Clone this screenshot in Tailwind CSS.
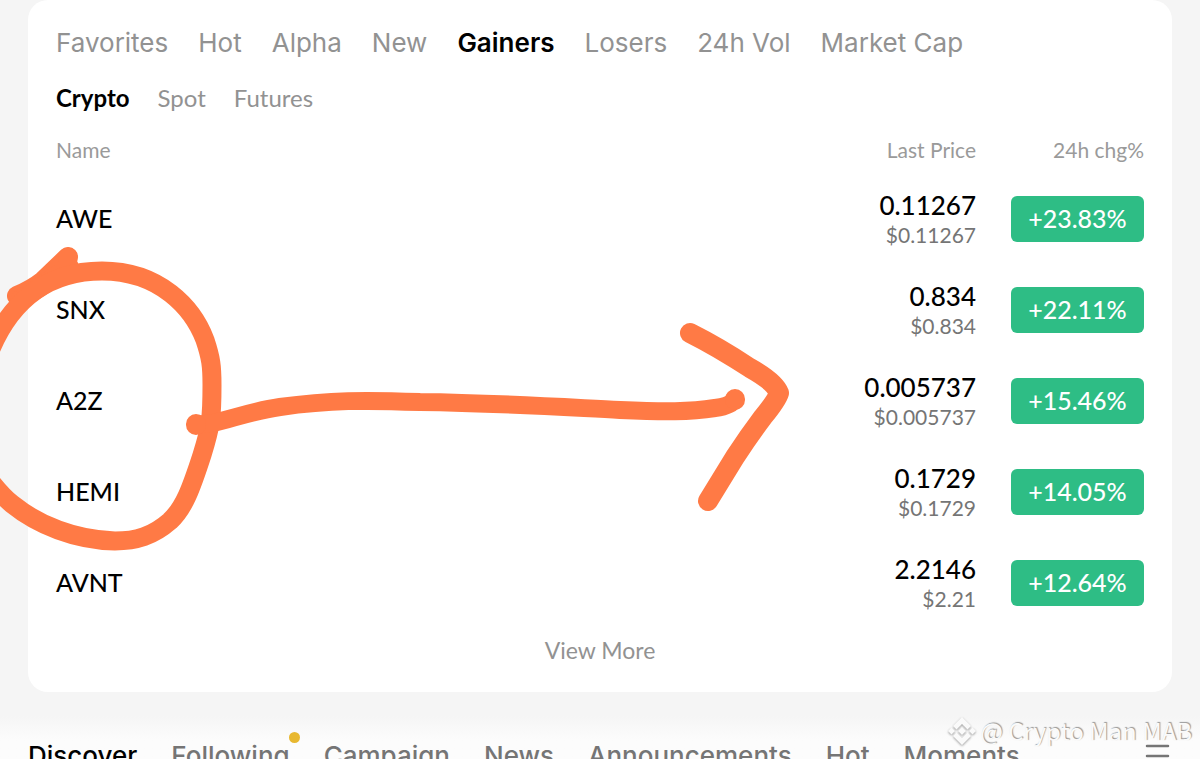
<!DOCTYPE html>
<html lang="en">
 <head>
  <meta charset="utf-8"/>
  <meta content="width=device-width, initial-scale=1.0" name="viewport"/>
  <title>Markets: Gainers</title>
  <script src="https://cdn.jsdelivr.net/npm/@tailwindcss/browser@4"></script>
 </head>
 <body class="relative h-screen overflow-hidden bg-[#f5f5f5] font-['Lato',sans-serif] text-black">
  <!-- Market list card -->
  <main class="mx-7 rounded-[20px] bg-white px-7 pt-6 pb-5">
   <nav class="flex gap-[30px] font-['Inter',sans-serif] text-[26px] leading-[38px] text-[#929292]" aria-label="Lists">
    <a href="#">Favorites</a>
    <a href="#">Hot</a>
    <a href="#">Alpha</a>
    <a href="#">New</a>
    <a href="#" class="font-semibold text-black">Gainers</a>
    <a href="#">Losers</a>
    <a href="#">24h Vol</a>
    <a href="#">Market Cap</a>
   </nav>
   <nav class="mt-4 flex gap-7 text-[24px] leading-10 text-[#929292]" aria-label="Market type">
    <a href="#" class="font-bold text-black">Crypto</a>
    <a href="#">Spot</a>
    <a href="#">Futures</a>
   </nav>
   <table class="mt-3 w-full">
    <thead>
     <tr class="h-[43px] text-[21px] leading-7 text-[#9a9a9a]">
      <th class="pb-1 text-left font-normal">Name</th>
      <th class="pb-1 text-right font-normal">Last Price</th>
      <th class="w-[168px] pb-1 text-right font-normal">24h chg%</th>
     </tr>
    </thead>
    <tbody>
     <tr class="h-[91px]">
      <td class="text-[25px] font-medium">AWE</td>
      <td class="text-right">
       <div class="text-[26px] leading-8 font-medium">0.11267</div>
       <div class="text-[21px] leading-7 text-[#757575]">$0.11267</div>
      </td>
      <td><button class="ml-auto block h-[46px] w-[133px] rounded-md bg-[#2ebd85] text-[25px] font-medium text-white">+23.83%</button></td>
     </tr>
     <tr class="h-[91px]">
      <td class="text-[25px] font-medium">SNX</td>
      <td class="text-right">
       <div class="text-[26px] leading-8 font-medium">0.834</div>
       <div class="text-[21px] leading-7 text-[#757575]">$0.834</div>
      </td>
      <td><button class="ml-auto block h-[46px] w-[133px] rounded-md bg-[#2ebd85] text-[25px] font-medium text-white">+22.11%</button></td>
     </tr>
     <tr class="h-[91px]">
      <td class="text-[25px] font-medium">A2Z</td>
      <td class="text-right">
       <div class="text-[26px] leading-8 font-medium">0.005737</div>
       <div class="text-[21px] leading-7 text-[#757575]">$0.005737</div>
      </td>
      <td><button class="ml-auto block h-[46px] w-[133px] rounded-md bg-[#2ebd85] text-[25px] font-medium text-white">+15.46%</button></td>
     </tr>
     <tr class="h-[91px]">
      <td class="text-[25px] font-medium">HEMI</td>
      <td class="text-right">
       <div class="text-[26px] leading-8 font-medium">0.1729</div>
       <div class="text-[21px] leading-7 text-[#757575]">$0.1729</div>
      </td>
      <td><button class="ml-auto block h-[46px] w-[133px] rounded-md bg-[#2ebd85] text-[25px] font-medium text-white">+14.05%</button></td>
     </tr>
     <tr class="h-[91px]">
      <td class="text-[25px] font-medium">AVNT</td>
      <td class="text-right">
       <div class="text-[26px] leading-8 font-medium">2.2146</div>
       <div class="text-[21px] leading-7 text-[#757575]">$2.21</div>
      </td>
      <td><button class="ml-auto block h-[46px] w-[133px] rounded-md bg-[#2ebd85] text-[25px] font-medium text-white">+12.64%</button></td>
     </tr>
    </tbody>
   </table>
   <div class="text-center">
    <a href="#" class="inline-block text-[23px] leading-[44px] text-[#929292]">View More</a>
   </div>
  </main>

  <!-- Feed tabs -->
  <div class="mt-6 flex items-center justify-between bg-linear-to-b from-[#f5f5f5] to-[#fcfcfc] to-40% px-7 pt-[22px]">
   <nav class="flex gap-[34px] font-['Inter',sans-serif] text-[26px] leading-9 font-medium whitespace-nowrap text-[#757575]" aria-label="Feed">
    <a href="#" class="text-black">Discover</a>
    <a href="#" class="relative">Following<span class="absolute -top-1.5 -right-2.5 size-[11px] rounded-full bg-[#e8b830]"></span></a>
    <a href="#">Campaign</a>
    <a href="#">News</a>
    <a href="#">Announcements</a>
    <a href="#">Hot</a>
    <a href="#">Moments</a>
   </nav>
   <button aria-label="Menu">
    <svg class="h-6 w-7" viewBox="0 0 28 24" fill="none" stroke="#757575" stroke-width="2.5" stroke-linecap="round">
     <path d="M3 2H24M3 12H24M3 22H24"/>
    </svg>
   </button>
  </div>

  <!-- Hand-drawn marker -->
  <svg class="pointer-events-none absolute inset-0 h-full w-full" viewBox="0 0 1200 759" fill="none" stroke="#ff7a45" stroke-width="19" stroke-linecap="round" stroke-linejoin="round" aria-hidden="true">
   <path stroke-width="20" d="M68 257L43 281Q33 289 17 296"/>
   <path d="M68 257L67 268Q50 280 20 300L42 286L69 266" fill="#ff7a45"/>
   <path d="M-12 356C8 304 45 271 102 271C160 271 193 308 205 340C211 358 212 366 212 385C212 418 211 426 202 455C191 489 184 508 170 521C153 536 136 541 115 541C75 540 38 525 12 504Q1 495 -12 478"/>
   <path stroke-width="18" d="M196 424C216 426 240 413 280 407C330 400 365 400 420 402C500 403 560 407 620 410C665 412 690 412 715 408Q731 406 735 399"/>
   <path stroke-width="20" d="M196 424V425M735 399V400"/>
   <path stroke-width="20" d="M690 333Q718 347 750 368Q775 382 779 393Q777 400 763 417Q748 437 735 457Q727 470 708 501"/>
  </svg>

  <!-- Author watermark -->
  <div class="absolute right-2 bottom-3 flex items-center gap-1 font-['Noto_Sans_CJK_SC',sans-serif] text-[24px] leading-8 text-[#fafafa] [text-shadow:1px_-1px_1px_#999]">
   <svg class="size-7 drop-shadow-[0_1px_1px_#999]" viewBox="0 0 28 28" fill="#fafafa" aria-hidden="true">
    <path d="M14 0L23 9L19.500 12.500L14 7L8.500 12.500L5 9ZM14 28L23 19L19.500 15.500L14 21L8.500 15.500L5 19ZM14 10L18 14L14 18L10 14ZM3.500 10.500L7 14L3.500 17.500L0 14ZM24.500 10.500L28 14L24.500 17.500L21 14Z"/>
   </svg>
   <span>@ Crypto Man MAB</span>
  </div>
 </body>
</html>
